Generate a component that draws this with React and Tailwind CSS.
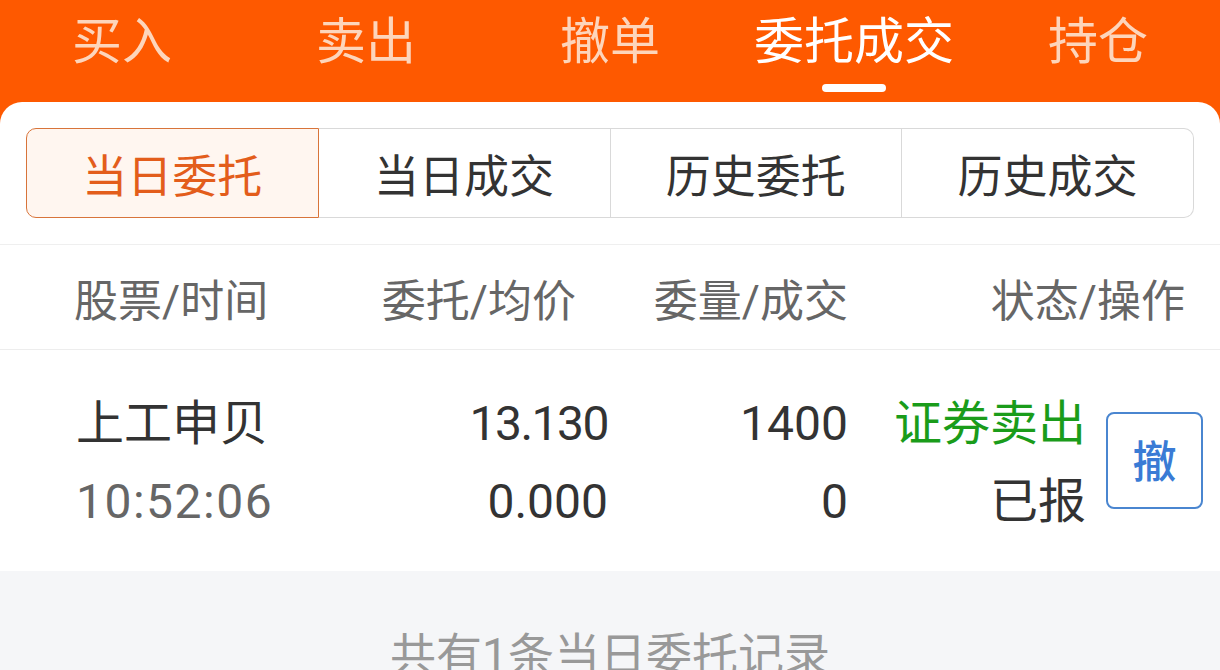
import React from "react";

const tabs = ["买入", "卖出", "撤单", "委托成交", "持仓"];
const segs = ["当日委托", "当日成交", "历史委托", "历史成交"];

export default function App() {
  return (
    <div className="w-[1220px] h-[670px] overflow-hidden bg-[#fe5900] flex flex-col font-['Roboto','Noto_Sans_CJK_SC',sans-serif]">
      <div className="h-[102px] flex shrink-0">
        {tabs.map((t, i) => (
          <div key={t} className="flex-1 flex flex-col items-center">
            <div className={`h-[84px] leading-[84px] text-[50px] ${i === 3 ? "text-white" : "text-[#fdd5bb]"}`}>{t}</div>
            <div className={`h-2 w-16 rounded-full ${i === 3 ? "bg-white" : ""}`} />
          </div>
        ))}
      </div>
      <div className="flex-1 min-h-0 bg-white rounded-t-[22px] flex flex-col overflow-hidden">
        <div className="shrink-0 px-[26px] pt-[26px] pb-[26px] border-b border-[#efefef]">
          <div className="flex h-[90px]">
            {segs.map((s, i) => (
              <div
                key={s}
                className={`flex-1 flex items-center justify-center pt-[9px] text-[45px] ${
                  i === 0
                    ? "bg-[#fff6f0] border border-[#d8743a] text-[#e35d1b] rounded-l-[10px]"
                    : "border-y border-r border-[#d9d9d9] text-[#333]"
                } ${i === 3 ? "rounded-r-[10px]" : ""}`}
              >
                {s}
              </div>
            ))}
          </div>
        </div>
        <div className="shrink-0 h-[105px] flex items-center pt-[9px] pl-[74px] text-[44px] text-[#666] border-b border-[#ededed]">
          <div className="w-[226px]">股票/时间</div>
          <div className="w-[276px] text-right">委托/均价</div>
          <div className="w-[272px] text-right">委量/成交</div>
          <div className="w-[337px] text-right">状态/操作</div>
        </div>
        <div className="shrink-0 h-[221px] flex items-center pl-[76px] text-[48px] text-[#333] leading-[78px]">
          <div className="w-[224px] pt-[4px]">
            <div>上工申贝</div>
            <div className="text-[#666] tracking-[1.5px]">10:52:06</div>
          </div>
          <div className="w-[308px] text-right pt-[4px]">
            <div className="tracking-[-1.5px]">13.130</div>
            <div>0.000</div>
          </div>
          <div className="w-[240px] text-right pt-[4px]">
            <div>1400</div>
            <div>0</div>
          </div>
          <div className="w-[238px] text-right pt-[4px]">
            <div className="text-[#1a9c1a]">证券卖出</div>
            <div>已报</div>
          </div>
          <div className="ml-5 w-[97px] h-[97px] border-2 border-[#4a86d0] rounded-[8px] flex items-center justify-center pt-[4px] text-[44px] font-medium text-[#3a7bd5] leading-none">
            撤
          </div>
        </div>
        <div className="flex-1 bg-[#f5f6f8] flex justify-center pt-[56px]">
          <div className="text-[46px] text-[#999] leading-[56px]">共有1条当日委托记录</div>
        </div>
      </div>
    </div>
  );
}
